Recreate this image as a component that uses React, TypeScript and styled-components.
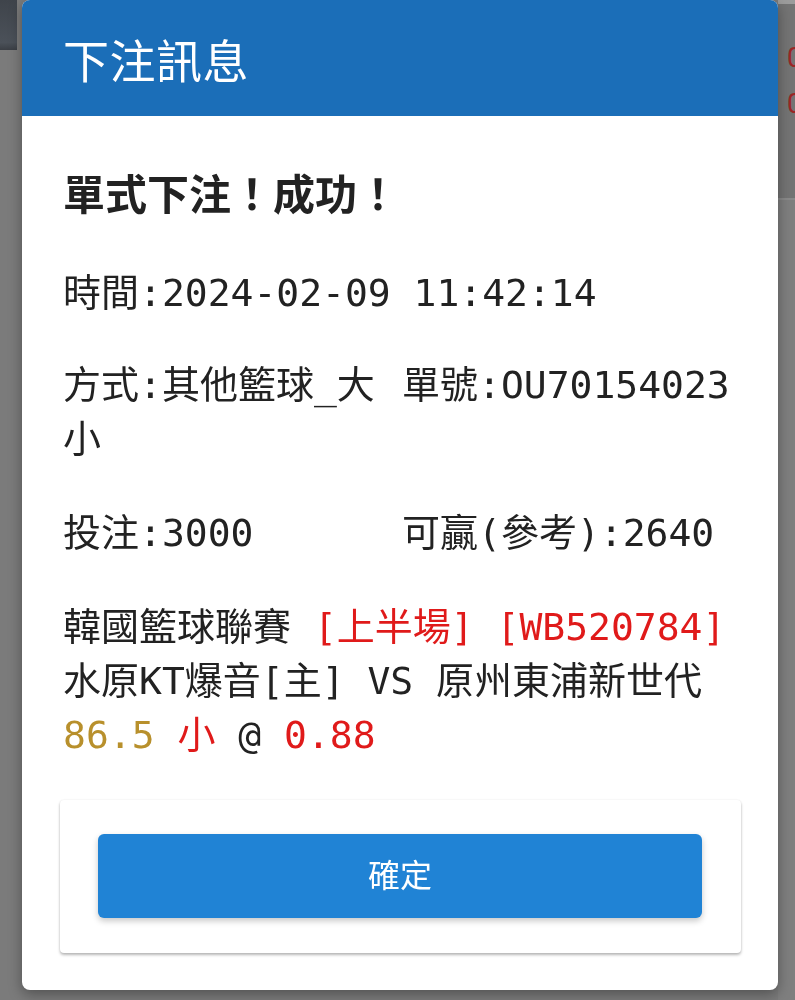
import React from "react";
import styled, { createGlobalStyle } from "styled-components";

const Global = createGlobalStyle`
  html, body { margin: 0; padding: 0; }
  body {
    background: #7b7b7b;
    font-family: "Noto Sans CJK TC", "Noto Sans", sans-serif;
    overflow: hidden;
  }
`;

const MONO = `"DejaVu Sans Mono", "Noto Sans CJK TC", monospace`;

const Page = styled.div`
  height: 1000px;
  display: flex;
  justify-content: space-between;
  align-items: flex-start;
`;

const NavStub = styled.div`
  width: 17px;
  height: 50px;
  background: linear-gradient(180deg, #3f444b 0%, #4b5159 85%, #3b3f45 100%);
`;

const SideStub = styled.div`
  width: 17px;
  height: 1000px;
  display: flex;
  flex-direction: column;
  background: #7f7f7f;
`;

const SideTopLine = styled.div`
  height: 4px;
  background: #9c9c9c;
`;

const SidePanel = styled.div`
  height: 196px;
  background: #747474;
  border-bottom: 2px solid #8a8a8a;
  padding: 31px 0 0 9px;
  box-sizing: border-box;
  font-family: "Roboto", "Noto Sans", sans-serif;
  font-size: 27px;
  line-height: 46px;
  color: #9c2626;
  overflow: hidden;
  white-space: nowrap;
`;

const Overlay = styled.div`
  position: fixed;
  inset: 0;
  display: flex;
  align-items: flex-start;
  padding: 0 17px 0 22px;
`;

const Modal = styled.div`
  width: 756px;
  height: 990px;
  background: #ffffff;
  border-radius: 8px;
  overflow: hidden;
  box-shadow: 0 4px 14px rgba(0, 0, 0, 0.35);
  display: flex;
  flex-direction: column;
`;

const Header = styled.div`
  height: 116px;
  flex: none;
  background: #1b6eb8;
  color: #ffffff;
  display: flex;
  align-items: center;
  padding-left: 41px;
  font-size: 46px;
  font-weight: 400;
  letter-spacing: 0.5px;
`;

const Body = styled.div`
  padding: 46px 37px 37px 38px;
  display: flex;
  flex-direction: column;
  color: #222222;
  font-family: ${MONO};
`;

const Title = styled.div`
  padding-left: 3px;
  font-family: "Noto Sans CJK TC", sans-serif;
  font-size: 42px;
  font-weight: 700;
  line-height: 60px;
  margin-bottom: 44px;
  color: #222222;
`;

const Row = styled.div<{ $gap: number }>`
  padding-left: 3px;
  display: grid;
  grid-template-columns: 1fr 1fr;
  font-size: 38px;
  line-height: 54px;
  margin-bottom: ${(p) => p.$gap}px;
`;

const Cell = styled.div<{ $wide?: boolean }>`
  min-width: 0;
  grid-column: ${(p) => (p.$wide ? "1 / -1" : "auto")};
  white-space: ${(p) => (p.$wide ? "nowrap" : "normal")};
`;

const Block = styled.div`
  padding-left: 3px;
  font-size: 38px;
  line-height: 54px;
  margin-bottom: 38px;
  white-space: nowrap;
`;

const Line = styled.div``;

const Tone = styled.span<{ $c: "red" | "gold" | "dark" }>`
  color: ${(p) =>
    p.$c === "red" ? "#e01a1a" : p.$c === "gold" ? "#b8902c" : "#222222"};
`;

const Card = styled.div`
  background: #ffffff;
  border-radius: 4px;
  box-shadow: 0 2px 3px rgba(0, 0, 0, 0.28), 0 0 2px rgba(0, 0, 0, 0.08);
  padding: 34px 39px 35px 38px;
`;

const ConfirmButton = styled.button`
  width: 100%;
  height: 84px;
  border: none;
  border-radius: 6px;
  background: #2083d5;
  color: #ffffff;
  font-family: "Noto Sans CJK TC", sans-serif;
  font-size: 32px;
  font-weight: 400;
  padding: 0 0 6px;
  box-shadow: 0 3px 6px rgba(0, 0, 0, 0.22);
  cursor: pointer;
  display: flex;
  align-items: center;
  justify-content: center;
`;

export default function App() {
  return (
    <>
      <Global />
      <Page>
        <NavStub />
        <SideStub>
          <SideTopLine />
          <SidePanel>
            <div>0</div>
            <div>0</div>
          </SidePanel>
        </SideStub>
      </Page>
      <Overlay>
        <Modal>
          <Header>下注訊息</Header>
          <Body>
            <Title>單式下注！成功！</Title>
            <Row $gap={38}>
              <Cell $wide>時間:2024-02-09 11:42:14</Cell>
            </Row>
            <Row $gap={40}>
              <Cell>方式:其他籃球_大小</Cell>
              <Cell>單號:OU70154023</Cell>
            </Row>
            <Row $gap={40}>
              <Cell>投注:3000</Cell>
              <Cell>可贏(參考):2640</Cell>
            </Row>
            <Block>
              <Line>
                韓國籃球聯賽 <Tone $c="red">[上半場] [WB520784]</Tone>
              </Line>
              <Line>水原KT爆音[主] VS 原州東浦新世代</Line>
              <Line>
                <Tone $c="gold">86.5</Tone> <Tone $c="red">小</Tone>{" "}
                <Tone $c="dark">@</Tone> <Tone $c="red">0.88</Tone>
              </Line>
            </Block>
            <Card>
              <ConfirmButton type="button">確定</ConfirmButton>
            </Card>
          </Body>
        </Modal>
      </Overlay>
    </>
  );
}
